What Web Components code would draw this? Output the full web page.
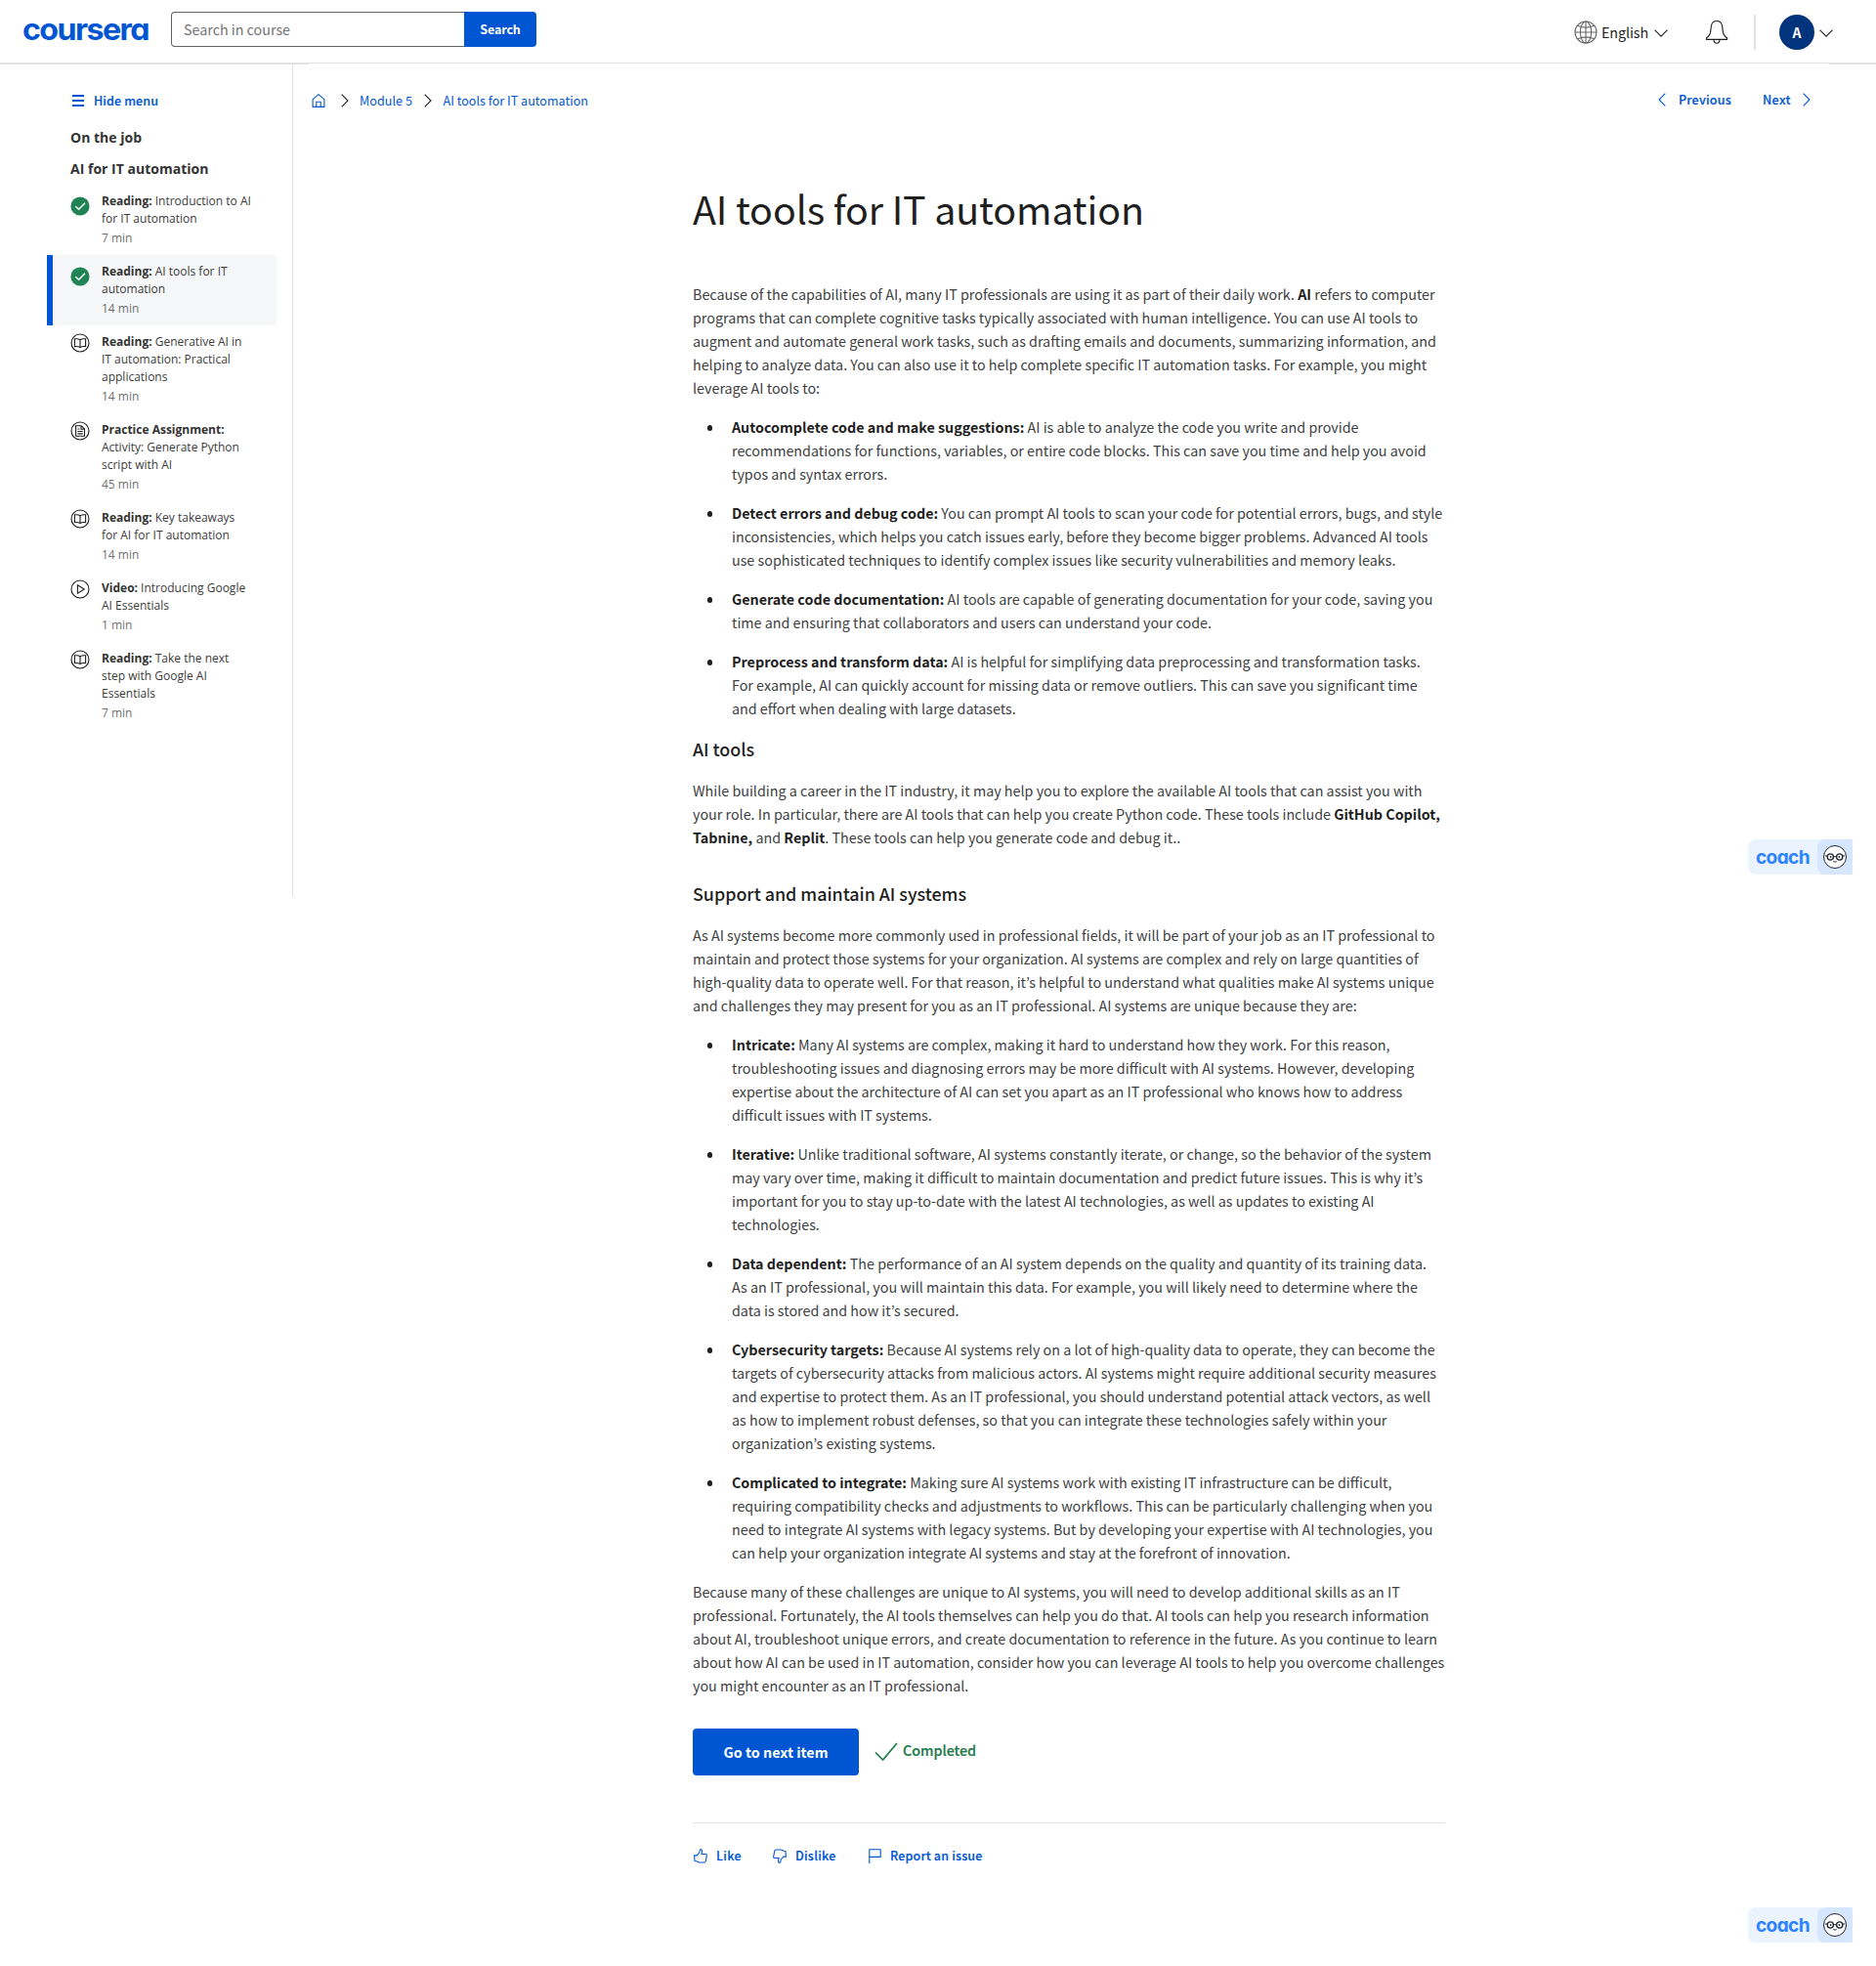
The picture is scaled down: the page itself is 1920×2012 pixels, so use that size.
<!DOCTYPE html>
<html lang="en">
<head>
<meta charset="utf-8">
<title>AI tools for IT automation | Coursera</title>
<style>
html,body{margin:0;padding:0;background:#fff}
body{font-family:"Noto Sans CJK KR","Open Sans",sans-serif;font-size:14.32px;color:#1f1f1f;overflow-x:hidden}
</style>
</head>
<body>
<course-page></course-page>
<script>
const define=(name,html,setup)=>customElements.define(name,class extends HTMLElement{
  connectedCallback(){
    if(this.shadowRoot)return;
    const root=this.attachShadow({mode:'open'});
    root.innerHTML=typeof html==='function'?html(this):html;
    if(setup)setup(this,root);
  }
});

const icons={
  home:[14,14,'<path d="M.6 6.2 7 .7l6.4 5.5M1.1 5.8v7.6h11.8V5.8M4.8 13.2V8.3h4.4v4.9" />'],
  right:[8,14,'<path d="M.7.6 7 7 .7 13.4"/>'],
  left:[8,14,'<path d="M7.3.6 1 7l6.3 6.4"/>'],
  down:[14,8,'<path d="M.5.6 7 7.1 13.5.6"/>'],
  menu:[12,12,'<path stroke-width="2" d="M0 1h12M0 6h12M0 11h12"/>'],
  globe:[24,24,'<circle cx="12" cy="12" r="11"/><ellipse cx="12" cy="12" rx="5.6" ry="11"/><path d="M1 12h22M12 1v22M3.6 5.2Q12 9 20.4 5.2M3.6 18.8Q12 15 20.4 18.8"/>'],
  bell:[24,26,'<path d="M1.5 20.4v-1.6c2.7-1.6 4-3.600 4.300-7.200C6.100 6.500 6.500 1.500 12 1.500s5.900 5 6.200 10.100c.3 3.600 1.600 5.600 4.300 7.200v1.600zM8.900 20.600c.3 2.500 1.300 3.600 3.100 3.600s2.800-1.100 3.100-3.600"/>'],
  book:[20,20,'<circle cx="10" cy="10" r="9"/><path d="M10 6.700C8.600 5.700 6.600 5.600 4.400 5.800v7.800c2.200-.2 4.200 0 5.600 1 1.400-1 3.400-1.200 5.600-1V5.800C13.400 5.600 11.400 5.700 10 6.700zv7.900"/>'],
  doc:[20,20,'<circle cx="10" cy="10" r="9"/><path d="M5.600 4.700h5.600l3.300 3.300v7.300H5.600zM11 4.700v3.500h3.500M7.400 8h2M7.400 10.500h5.300M7.400 12.900h5.300"/>'],
  play:[20,20,'<circle cx="10" cy="10" r="9"/><path d="M7.400 5.800v8.400l6.800-4.200z"/>'],
  done:[20,20,'<circle cx="10" cy="10" r="9.600" fill="#1f8354" stroke="none"/><path stroke="#fff" stroke-width="1.500" d="M5.300 10.200 8.600 13.300 15 6.800"/>'],
  check:[24,20,'<path stroke-width="1.700" d="M1 10.500 8.600 18 23 1"/>'],
  like:[14,15,'<path d="M.6 6.900h2.500L5.700 4c.5-.9.200-2.500.9-3.100 1.100-.8 1.900.4 1.800 1.800L8 5.500h4c1 0 1.500.6 1.300 1.500l-1 5.700c-.2.900-.7 1.300-1.600 1.300H6.200c-1.400 0-2-.9-3.400-1.200L1 12.500z"/>'],
  flag:[13,15,'<path d="M.8 15V.8h11.400v7.600H.8"/>']
};
define('ui-icon',el=>{
  const n=el.getAttribute('name'),flip=n==='dislike',i=icons[flip?'like':n];
  return `<style>:host{display:inline-flex;flex:none}svg{display:block;fill:none;stroke:currentColor;stroke-width:1.1;${flip?'transform:rotate(180deg)':''}}</style>
  <svg width="${i[0]}" height="${i[1]}" viewBox="0 0 ${i[0]} ${i[1]}">${i[2]}</svg>`;
});

define('course-page',`<style>
:host{display:flex;flex-direction:column;width:1920px;height:2012px;background:#fff}
.body{display:flex;align-items:flex-start}
main{flex:1}
.c1,.c2{position:absolute;left:1789px}.c1{top:859px}.c2{top:1952px}
</style>
<course-header></course-header>
<div class="body"><side-nav></side-nav><main><crumb-bar></crumb-bar><course-reading></course-reading></main></div>
<coach-badge class="c1"></coach-badge><coach-badge class="c2"></coach-badge>`);

define('course-header',`<style>
:host{display:flex;flex-direction:column}
.bar{display:flex;height:64px;box-sizing:border-box;padding-left:20px}
.rule{display:flex;justify-content:space-between;height:2px;background:linear-gradient(#e1e1e1 1px,#fff 1px)}
.rule i{display:block;height:2px;background:#e1e1e1}
.logo{margin:4px 19px 0 0;height:56px;display:block;overflow:visible}
.find{display:flex;margin-top:12px;height:36px}
.box{width:300px;height:36px;box-sizing:border-box;border:1px solid #636363;border-right:0;border-radius:4px 0 0 4px;padding-left:12px;color:#757575;line-height:33px}
.btn{width:74px;height:36px;background:#0056d2;color:#fff;font-size:12.53px;font-weight:700;border-radius:0 4px 4px 0;line-height:36px;text-align:center}
.tools{display:flex;margin-left:auto;align-items:flex-start}
.lang{line-height:24px;margin:21px 6px 0 4px}
.sep{width:2px;height:36px;background:#e1e1e1;margin:15px 24px 0 26px}
.av{width:36px;height:36px;border-radius:50%;background:#00347d;color:#fff;font-weight:700;margin:15px 5px 0 0;line-height:36px;text-align:center;font-size:14px}
</style>
<div class="bar">
<svg class="logo" width="136" height="56"><text x="3" y="37" textLength="129" lengthAdjust="spacingAndGlyphs" font-family="Inter" font-weight="700" font-size="31" letter-spacing="-1.500" fill="#0056d2" style="font-feature-settings:'cv11'">coursera</text></svg>
<div class="find"><div class="box"><fit-text w="109">Search in course</fit-text></div><div class="btn"><fit-text w="41.500">Search</fit-text></div></div>
<div class="tools"><ui-icon name="globe" style="color:#666;margin-top:21px"></ui-icon><span class="lang"><fit-text w="48">English</fit-text></span><ui-icon name="down" style="margin:30px 38px 0 0"></ui-icon>
<ui-icon name="bell" style="margin-top:20px"></ui-icon><span class="sep"></span><span class="av">A</span><ui-icon name="down" style="margin:30px 44px 0 0"></ui-icon></div>
</div>
<div class="rule"><i style="width:316px"></i><i style="width:48px"></i></div>`);

define('side-nav',`<style>
:host{display:flex;flex-direction:column;width:300px;height:852px;box-sizing:border-box;border-right:1px solid #e1e1e1;padding-left:48px;font-family:"Open Sans",sans-serif}
.hide{display:flex;align-items:center;gap:10px;margin:25px 0 0 26px;height:24px;color:#0056d2;font-family:"Noto Sans CJK KR",sans-serif;font-size:12.53px;font-weight:500;-webkit-text-stroke:.2px}
.hide fit-text{margin-bottom:2px}
b{display:block;font-size:14px;font-weight:700;line-height:20px;margin-left:24px;color:#333}
</style>
<div class="hide"><ui-icon name="menu"></ui-icon><fit-text w="66">Hide menu</fit-text></div>
<b style="margin-top:16px"><fit-text w="73">On the job</fit-text></b>
<b style="margin-top:12px;margin-bottom:6px"><fit-text w="141.500">AI for IT automation</fit-text></b>
<nav-item icon="done" time="7 min"><strong>Reading:</strong> Introduction to AI<br>for IT automation</nav-item>
<nav-item icon="done" current time="14 min"><strong>Reading:</strong> AI tools for IT<br>automation</nav-item>
<nav-item icon="book" time="14 min"><strong>Reading:</strong> Generative AI in<br>IT automation: Practical<br>applications</nav-item>
<nav-item icon="doc" time="45 min"><strong>Practice Assignment:</strong><br>Activity: Generate Python<br>script with AI</nav-item>
<nav-item icon="book" time="14 min"><strong>Reading:</strong> Key takeaways<br>for AI for IT automation</nav-item>
<nav-item icon="play" time="1 min"><strong>Video:</strong> Introducing Google<br>AI Essentials</nav-item>
<nav-item icon="book" time="7 min"><strong>Reading:</strong> Take the next<br>step with Google AI<br>Essentials</nav-item>`);

define('nav-item',el=>`<style>
:host{display:flex;align-items:flex-start;box-sizing:border-box;width:235px;padding:8px 0 8px 18px;border-left:6px solid transparent;font-size:12px;line-height:18px;white-space:nowrap;color:#3c3c3c}
:host([current]){background:#f5f7f8;border-left-color:#0056d2}
::slotted(strong){color:#333}
ui-icon{margin:0 12px 0 0;color:#1f1f1f}
:host([icon=done]) ui-icon{margin-top:4px}
.time{color:#707070;margin-top:2px}
</style><ui-icon name="${el.getAttribute('icon')}"></ui-icon><div><slot></slot><div class="time">${el.getAttribute('time')}</div></div>`);

define('crumb-bar',`<style>
:host{display:flex;align-items:center;height:24px;padding:25px 67px 0 19px;color:#0056d2;font-size:12.53px}
fit-text{margin-bottom:2px}
.k{color:#1f1f1f}.go{font-weight:500;display:flex;align-items:center;margin-bottom:2px;-webkit-text-stroke:.2px}
</style><ui-icon name="home"></ui-icon><ui-icon class="k" name="right" style="margin:0 11px 0 16px"></ui-icon><fit-text w="54">Module 5</fit-text>
<ui-icon class="k" name="right" style="margin:0 11.500px 0 12px"></ui-icon><fit-text w="148.500">AI tools for IT automation</fit-text>
<span class="go" style="margin-left:auto"><ui-icon name="left" style="margin-right:13px"></ui-icon><fit-text w="54">Previous</fit-text></span>
<span class="go" style="margin-left:32px"><fit-text w="29">Next</fit-text><ui-icon name="right" style="margin-left:12px"></ui-icon></span>`);

define('course-reading',`<style>
:host{display:block;margin:70px 0 0 409px;width:770px;line-height:24px;white-space:nowrap}
h1{font-size:39.4px;line-height:56px;font-weight:400;margin:0 0 48px}
h2{font-size:17.9px;line-height:24px;font-weight:500;margin:17px 0 19px}
h2.far{margin-top:33px}
p{margin:0;color:#3d4042}
ul{margin:16px 0;padding:0;list-style:none}
li{display:flex;color:#3d4042}
li+li{margin-top:16px}
li::before{content:"";width:5.4px;height:5.4px;border-radius:50%;background:#1f1f1f;margin:10.4px 19.6px 0 15px;flex:none}
b{color:#1f1f1f}
.end{display:flex;margin-top:32px;height:48px}
.next{width:170px;background:#0056d2;border-radius:4px;color:#fff;font-weight:700;line-height:47px;text-align:center}
.ok{display:flex;color:#1f7a4d;font-weight:500;margin-left:16px;-webkit-text-stroke:.2px}
hr{border:0;height:1px;background:#e1e1e1;margin:48px 0 25px}
.fb{display:flex;align-items:center;height:18px;color:#0056d2;font-size:12.53px;font-weight:500;-webkit-text-stroke:.2px}
.fb ui-icon{margin-bottom:2px}
.fb fit-text{padding-bottom:2px}
</style>
<h1><fit-text w="462">AI tools for IT automation</fit-text></h1>
<p>Because of the capabilities of AI, many IT professionals are using it as part of their daily work. <b>AI</b> refers to computer<br>programs that can complete cognitive tasks typically associated with human intelligence. You can use AI tools to<br>augment and automate general work tasks, such as drafting emails and documents, summarizing information, and<br>helping to analyze data. You can also use it to help complete specific IT automation tasks. For example, you might<br>leverage AI tools to:</p>
<ul>
<li><div><b>Autocomplete code and make suggestions:</b> AI is able to analyze the code you write and provide<br>recommendations for functions, variables, or entire code blocks. This can save you time and help you avoid<br>typos and syntax errors.</div></li>
<li><div><b>Detect errors and debug code:</b> You can prompt AI tools to scan your code for potential errors, bugs, and style<br>inconsistencies, which helps you catch issues early, before they become bigger problems. Advanced AI tools<br>use sophisticated techniques to identify complex issues like security vulnerabilities and memory leaks.</div></li>
<li><div><b>Generate code documentation:</b> AI tools are capable of generating documentation for your code, saving you<br>time and ensuring that collaborators and users can understand your code.</div></li>
<li><div><b>Preprocess and transform data:</b> AI is helpful for simplifying data preprocessing and transformation tasks.<br>For example, AI can quickly account for missing data or remove outliers. This can save you significant time<br>and effort when dealing with large datasets.</div></li>
</ul>
<h2><fit-text w="63">AI tools</fit-text></h2>
<p>While building a career in the IT industry, it may help you to explore the available AI tools that can assist you with<br>your role. In particular, there are AI tools that can help you create Python code. These tools include <b>GitHub Copilot,</b><br><b>Tabnine,</b> and <b>Replit</b>. These tools can help you generate code and debug it..</p>
<h2 class="far"><fit-text w="280">Support and maintain AI systems</fit-text></h2>
<p>As AI systems become more commonly used in professional fields, it will be part of your job as an IT professional to<br>maintain and protect those systems for your organization. AI systems are complex and rely on large quantities of<br>high-quality data to operate well. For that reason, it’s helpful to understand what qualities make AI systems unique<br>and challenges they may present for you as an IT professional. AI systems are unique because they are:</p>
<ul>
<li><div><b>Intricate:</b> Many AI systems are complex, making it hard to understand how they work. For this reason,<br>troubleshooting issues and diagnosing errors may be more difficult with AI systems. However, developing<br>expertise about the architecture of AI can set you apart as an IT professional who knows how to address<br>difficult issues with IT systems.</div></li>
<li><div><b>Iterative:</b> Unlike traditional software, AI systems constantly iterate, or change, so the behavior of the system<br>may vary over time, making it difficult to maintain documentation and predict future issues. This is why it’s<br>important for you to stay up-to-date with the latest AI technologies, as well as updates to existing AI<br>technologies.</div></li>
<li><div><b>Data dependent:</b> The performance of an AI system depends on the quality and quantity of its training data.<br>As an IT professional, you will maintain this data. For example, you will likely need to determine where the<br>data is stored and how it’s secured.</div></li>
<li><div><b>Cybersecurity targets:</b> Because AI systems rely on a lot of high-quality data to operate, they can become the<br>targets of cybersecurity attacks from malicious actors. AI systems might require additional security measures<br>and expertise to protect them. As an IT professional, you should understand potential attack vectors, as well<br>as how to implement robust defenses, so that you can integrate these technologies safely within your<br>organization’s existing systems.</div></li>
<li><div><b>Complicated to integrate:</b> Making sure AI systems work with existing IT infrastructure can be difficult,<br>requiring compatibility checks and adjustments to workflows. This can be particularly challenging when you<br>need to integrate AI systems with legacy systems. But by developing your expertise with AI technologies, you<br>can help your organization integrate AI systems and stay at the forefront of innovation.</div></li>
</ul>
<p>Because many of these challenges are unique to AI systems, you will need to develop additional skills as an IT<br>professional. Fortunately, the AI tools themselves can help you do that. AI tools can help you research information<br>about AI, troubleshoot unique errors, and create documentation to reference in the future. As you continue to learn<br>about how AI can be used in IT automation, consider how you can leverage AI tools to help you overcome challenges<br>you might encounter as an IT professional.</p>
<div class="end"><div class="next"><fit-text w="107">Go to next item</fit-text></div><div class="ok"><ui-icon name="check" style="margin:14px 5px 0 0"></ui-icon><fit-text w="75" style="margin-top:10px">Completed</fit-text></div></div>
<hr>
<div class="fb"><ui-icon name="like" style="margin-left:1px"></ui-icon><fit-text w="26" style="margin:0 32px 0 9px">Like</fit-text><ui-icon name="dislike"></ui-icon><fit-text w="41.500" style="margin:0 33px 0 9px">Dislike</fit-text><ui-icon name="flag"></ui-icon><fit-text w="94.500" style="margin-left:9.500px">Report an issue</fit-text></div>`);

define('coach-badge',`<style>
:host{display:flex;width:107px;height:36px;background:#ebf3ff;border-radius:8px 0 0 8px}
.face{width:36px;height:36px;margin-left:auto;background:#d6e6ff;border-radius:8px 2px 2px 8px;display:flex}
svg{display:block;overflow:visible}
</style><svg width="70" height="36"><text x="8" y="25" textLength="55" lengthAdjust="spacingAndGlyphs" font-family="Inter" font-weight="700" font-size="19" letter-spacing="-.6" fill="#2d83ff" style="font-feature-settings:'cv11'">coach</text></svg>
<span class="face"><svg width="36" height="36" viewBox="0 0 36 36" fill="none" stroke="#20242e"><circle cx="18" cy="18" r="11.500" fill="#fff"/><circle cx="13.300" cy="18" r="3.100" stroke-width="1.300"/><circle cx="22.700" cy="18" r="3.100" stroke-width="1.300"/><path d="M16.200 17.700h3.600M8 17h2.200M25.800 17H28M16.300 22.600q1.700 1 3.400 0" stroke-width="1"/><circle cx="13.600" cy="18" r=".9" fill="#20242e" stroke="none"/><circle cx="22.400" cy="18" r=".9" fill="#20242e" stroke="none"/></svg></span>`);

/* Tracks a label out or in so that it fills the width given in "w". */
define('fit-text',`<style>:host{display:inline-block;white-space:nowrap}</style><slot></slot>`,el=>{
  const w=parseFloat(el.getAttribute('w')),n=el.textContent.length;
  el.style.letterSpacing=((w-el.getBoundingClientRect().width)/n).toFixed(3)+'px';
});
</script>
</body>
</html>
